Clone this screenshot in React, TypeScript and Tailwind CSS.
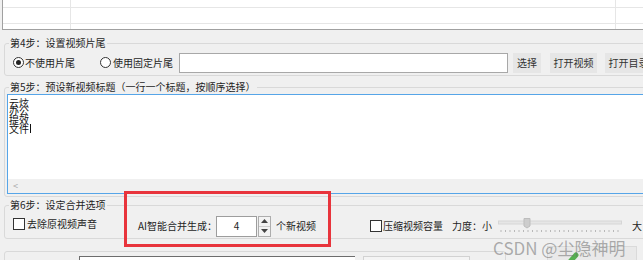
import React from 'react';

const Radio = ({ checked }: { checked?: boolean }) => (
  <span className="w-[11px] h-[11px] shrink-0 rounded-full border border-[#333] bg-white flex items-center justify-center">
    {checked && <span className="w-[5px] h-[5px] rounded-full bg-[#222]" />}
  </span>
);

const Check = () => <span className="block w-[12px] h-[12px] shrink-0 border border-[#333] bg-white" />;

const Spinner = () => (
  <div className="ml-[1px] w-[13px] h-[21px] shrink-0 border border-[#adadad] bg-[#f3f3f3] flex flex-col">
    <div className="flex-1 flex items-center justify-center border-b border-[#cfcfcf]">
      <svg width="7" height="4" viewBox="0 0 7 4"><path d="M0 4 L3.5 0 L7 4 Z" fill="#444" /></svg>
    </div>
    <div className="flex-1 flex items-center justify-center">
      <svg width="7" height="4" viewBox="0 0 7 4"><path d="M0 0 L3.5 4 L7 0 Z" fill="#444" /></svg>
    </div>
  </div>
);

const Slider = () => {
  const ticks = Array.from({ length: 27 }, (_, i) => 3 + i * 4.5);
  return (
    <svg width="124" height="16" viewBox="0 0 124 16" className="ml-[6px] shrink-0">
      <rect x="0.5" y="3" width="123" height="3" fill="#e6e6e6" stroke="#d6d6d6" strokeWidth="1" />
      <path d="M26 0.5 H32 V8 L29 10 L26 8 Z" fill="#cdcdcd" stroke="#bdbdbd" strokeWidth="1" />
      {ticks.map((x) => (
        <line key={x} x1={x} y1="12" x2={x} y2="14" stroke="#b8b8b8" strokeWidth="1" />
      ))}
    </svg>
  );
};

const TopGrid = () => {
  const cells = [
    'border-b border-r', 'border-b border-r', 'border-b',
    'border-b border-r', 'border-b border-r', 'border-b',
    'border-r', 'border-r', '',
  ];
  return (
    <div className="ml-[2px] h-[30px] shrink-0 border-l border-b border-[#a0a0a0] bg-white grid grid-cols-[68px_545px_1fr] grid-rows-[8px_16px_1fr]">
      {cells.map((c, i) => (
        <div key={i} className={`border-[#e6e6e6] ${c}`} />
      ))}
    </div>
  );
};

export default function App() {
  return (
    <div className="relative w-[643px] h-[260px] overflow-hidden bg-[#f0f0f0] text-[10px] leading-[12px] text-[#1e1e1e] font-['Noto_Sans_CJK_SC','Microsoft_YaHei',sans-serif] flex flex-col">
      <TopGrid />

      {/* step 4 */}
      <fieldset className="mt-[7px] ml-[4px] w-[680px] shrink-0 border border-[#d9d9d9] rounded-[3px] pt-[3px] pb-[2px]">
        <legend className="ml-[4px] px-[1px] leading-[12px]">第4步：设置视频片尾</legend>
        <div className="flex items-center h-[21px] pl-[8px] whitespace-nowrap">
          <Radio checked />
          <span className="ml-[1px] w-[50px] shrink-0">不使用片尾</span>
          <span className="ml-[25px] shrink-0"><Radio /></span>
          <span className="ml-[2px] w-[60px] shrink-0">使用固定片尾</span>
          <div className="ml-[6px] w-[329px] h-[20px] shrink-0 bg-white border border-[#a8a8a8]" />
          <div className="ml-[5px] w-[28px] h-[20px] shrink-0 bg-[#e6e6e6] text-[#333] flex items-center justify-center">选择</div>
          <div className="ml-[9px] w-[47px] h-[20px] shrink-0 bg-[#e6e6e6] text-[#333] flex items-center justify-center">打开视频</div>
          <div className="ml-[8px] w-[47px] h-[20px] shrink-0 bg-[#e6e6e6] text-[#333] flex items-center justify-center">打开目录</div>
        </div>
      </fieldset>

      {/* step 5 */}
      <fieldset className="mt-[5px] ml-[4px] w-[680px] shrink-0 border border-[#d9d9d9] rounded-[3px] pb-[2px]">
        <legend className="ml-[4px] px-[1px] leading-[12px]">第5步：预设新视频标题（一行一个标题，按顺序选择）</legend>
        <div className="mt-[1px] ml-[2px] h-[100px] border border-[#56a5e8] bg-white flex flex-col">
          <div className="flex-1 pl-[1px] pt-[4px] leading-[8.4px] text-[#111]">
            <div>云炫</div>
            <div>办公</div>
            <div>提效</div>
            <div className="flex items-center">文件<span className="ml-[1px] w-[1px] h-[9px] bg-[#111]" /></div>
          </div>
          <div className="h-[14px] bg-[#f0f0f0] flex items-center pl-[5px] text-[#a8a8a8] text-[9px]">&lt;</div>
        </div>
      </fieldset>

      {/* step 6 */}
      <fieldset className="mt-[2px] ml-[4px] w-[680px] shrink-0 border border-[#d9d9d9] rounded-[3px] pt-[4px] pb-[1px]">
        <legend className="ml-[4px] px-[1px] leading-[12px]">第6步：设定合并选项</legend>
        <div className="flex items-center h-[22px] pl-[8px] whitespace-nowrap">
          <div className="flex items-center mb-[5px] shrink-0">
            <Check />
            <span className="ml-[2px] w-[68px]">去除原视频声音</span>
          </div>
          <span className="ml-[43px] w-[78px] shrink-0">AI智能合并生成：</span>
          <div className="w-[41px] h-[21px] shrink-0 bg-white border border-[#9d9d9d] flex items-center justify-center">4</div>
          <Spinner />
          <span className="ml-[5px] w-[40px] shrink-0">个新视频</span>
          <span className="ml-[54px] shrink-0"><Check /></span>
          <span className="ml-[1px] w-[58px] shrink-0">压缩视频容量</span>
          <span className="ml-[11px] w-[40px] shrink-0">力度：小</span>
          <Slider />
          <span className="ml-[10px] shrink-0">大</span>
        </div>
      </fieldset>

      {/* step 7 (cut off) */}
      <div className="mt-[7px] flex items-start shrink-0">
        <fieldset className="mt-[5px] ml-[4px] w-[502px] h-[30px] border border-[#d9d9d9] rounded-[3px] pt-[4px]">
          <div className="flex">
            <div className="ml-[74px] w-[276px] h-[20px] bg-white border-t border-l border-[#6d6d6d]" />
            <div className="ml-[8px] w-[107px] h-[20px] bg-[#f4f4f4] border border-[#d2d2d2]" />
          </div>
        </fieldset>
        <div className="ml-[41px] w-[90px] h-[30px] bg-[#e9e9e9] border border-[#dadada] pl-[16px] pt-[4px]">
          <svg width="16" height="14" viewBox="0 0 16 14">
            <line x1="3" y1="14" x2="12" y2="4" stroke="#55b04f" strokeWidth="5" strokeLinecap="round" />
          </svg>
        </div>
      </div>

      {/* highlight box */}
      <div className="absolute left-[124px] top-[191px] w-[207px] h-[56px] border-[3px] border-[#e8343c]" />

      {/* watermark */}
      <div className="absolute left-[493px] top-[238px] text-[17px] leading-[20px] text-[rgba(110,110,110,0.55)] whitespace-nowrap">
        CSDN @尘隐神明
      </div>
    </div>
  );
}
